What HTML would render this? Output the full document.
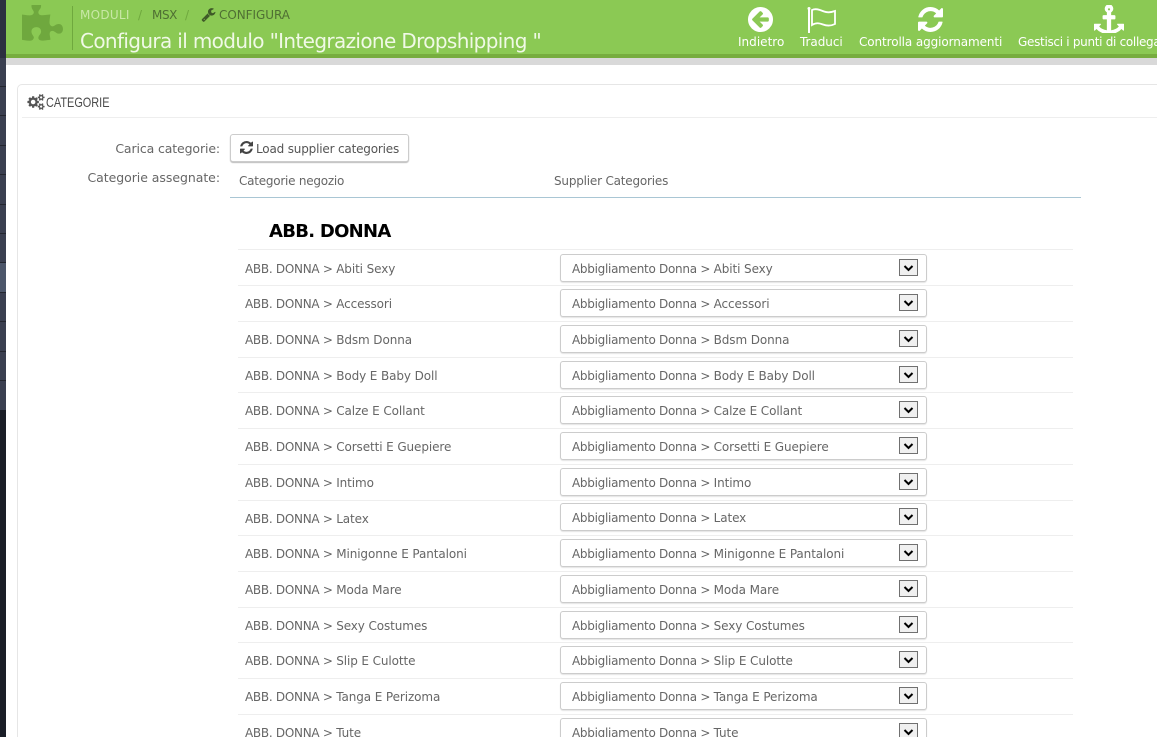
<!DOCTYPE html>
<html lang="it">
<head>
<meta charset="utf-8">
<title>Configura il modulo</title>
<style>
html,body{margin:0;padding:0;background:#fff;width:1157px;height:737px;overflow:hidden}
#w{position:absolute;left:0;top:0;width:1157px;height:737px;overflow:hidden;font-family:"DejaVu Sans","Liberation Sans",sans-serif;font-size:12px;color:#666}
div,span,svg{position:absolute}
em{font-style:normal;letter-spacing:-.28px}
.t{white-space:nowrap;letter-spacing:-.2px;line-height:16px}
.sep{left:0;width:6px;height:1px;background:#23262f}
.top{height:16px;line-height:16px;white-space:nowrap}
.tb{color:#fff;top:34px;white-space:nowrap;letter-spacing:-.14px;line-height:16px;font-size:12px}
.line{left:238px;width:835px;height:1px;background:#eeeeee}
.l{left:245px;white-space:nowrap;letter-spacing:-.1px;line-height:16px;color:#666;margin-top:1px}
.sel{left:560px;width:365px;height:26px;border:1px solid #ccc;border-radius:3px;background:#fff;box-shadow:0 1px 1px #e4e4e4}
.sel b{position:absolute;left:11px;top:6px;font-weight:normal;white-space:nowrap;letter-spacing:-.1px;line-height:16px;color:#666}
.sel i{position:absolute;left:338px;top:4px;width:17px;height:15px;border:1px solid #707070;background:#f0f0f0}
.sel svg{left:3px;top:4px}
</style>
</head>
<body>
<div id="w">
<div style="left:0;top:0;width:6px;height:58px;background:#2c3040"></div>
<div style="left:0;top:58px;width:6px;height:352px;background:#3a3f50"></div>
<div style="left:0;top:263px;width:6px;height:29px;background:#4c566a"></div>
<div style="left:0;top:410px;width:6px;height:327px;background:#1a1e27"></div>
<div class="sep" style="top:86px"></div><div class="sep" style="top:115px"></div><div class="sep" style="top:145px"></div><div class="sep" style="top:174px"></div><div class="sep" style="top:204px"></div><div class="sep" style="top:233px"></div><div class="sep" style="top:262px"></div><div class="sep" style="top:292px"></div><div class="sep" style="top:321px"></div><div class="sep" style="top:351px"></div><div class="sep" style="top:380px"></div>

<div style="left:6px;top:0;width:1151px;height:54px;background:#8bc954"></div>
<div style="left:6px;top:54px;width:1151px;height:4px;background:#77ad3f"></div>
<div style="left:6px;top:58px;width:1151px;height:7px;background:#d9d9d9"></div>

<svg style="left:22px;top:5px" width="41" height="38" viewBox="0 128 1664 1536" preserveAspectRatio="none"><path fill="#6fa83e" d="M1664 1098q0 81-44.500 135t-123.500 54q-41 0-77.500-17.500t-59-38-56.500-38-71-17.500q-110 0-110 124 0 39 16 115t15 115v5q-22 0-33 1-34 3-97.500 11.500t-115.500 13.500-98 5q-61 0-103-26.500t-42-83.500q0-37 17.500-71t38-56.500 38-59 17.500-77.500q0-79-54-123.500t-135-44.500q-84 0-143 45.500t-59 127.500q0 43 15 83t33.500 64.500 33.500 53 15 50.500q0 45-46 89-37 35-117 35-95 0-245-24-9-2-27.500-4t-27.500-4l-13-2q-1 0-3-1-2 0-2-1v-1024q2 1 17.500 3.500t34 5 21.500 3.500q150 24 245 24 80 0 117-35 46-44 46-89 0-22-15-50.500t-33.500-53-33.500-64.500-15-83q0-82 59-127.500t144-45.500q80 0 134 44.500t54 123.500q0 41-17.500 77.500t-38 59-38 56.500-17.500 71q0 57 42 83.500t103 26.500q64 0 180-15t163-17v2q-1 2-3.500 17.500t-5 34-3.500 21.500q-24 150-24 245 0 80 35 117 44 46 89 46 22 0 50.500-15t53-33.500 64.500-33.500 83-15q82 0 127.500 59t45.500 143z"/></svg>
<div style="left:72px;top:6px;width:1px;height:44px;background:#6fa83e"></div>

<div class="top" style="left:80px;top:7px;color:#c8e8a6;letter-spacing:.27px">MODULI</div>
<div class="top" style="left:138px;top:7px;color:#6fa83e">/</div>
<div class="top" style="left:152px;top:7px;color:#4f6f33;letter-spacing:-.4px">MSX</div>
<div class="top" style="left:185px;top:7px;color:#6fa83e">/</div>
<svg style="left:201px;top:7px" width="15" height="15" viewBox="0 0 1792 1792"><path fill="#3f5a28" d="M448 1472q0-26-19-45t-45-19-45 19-19 45 19 45 45 19 45-19 19-45zm644-420l-682 682q-37 37-90 37-52 0-91-37l-106-108q-38-36-38-90 0-53 38-91l681-681q39 98 114.500 173.500t173.500 114.500zm634-435q0 39-23 106-47 134-164.500 217.500t-258.500 83.500q-185 0-316.500-131.500t-131.500-316.500 131.500-316.500 316.500-131.500q58 0 121.500 16.500t107.500 46.500q16 11 16 28t-16 28l-293 169v224l193 107q5-3 79-48.500t135.500-81 70.500-35.500q15 0 23.500 10t8.500 25z"/></svg>
<div class="top" style="left:219px;top:7px;color:#4f6f33;letter-spacing:-.05px">CONFIGURA</div>
<div class="top" style="left:80px;top:28px;height:26px;line-height:26px;font-size:20px;color:#f0f9e6;letter-spacing:-.64px;font-family:'DejaVu Sans ExtraLight','DejaVu Sans',sans-serif">Configura il modulo "Integrazione Dropshipping "</div>

<svg style="left:748px;top:7px" width="25" height="25" viewBox="128 128 1536 1536"><path fill="#fff" d="M1408 960v-128q0-26-19-45t-45-19h-502l189-189q19-19 19-45t-19-45l-91-91q-18-18-45-18t-45 18l-362 362-91 91q-18 18-18 45t18 45l91 91 362 362q18 18 45 18t45-18l91-91q18-18 18-45t-18-45l-189-189h502q26 0 45-19t19-45zm256-64q0 209-103 385.500t-279.500 279.500-385.500 103-385.500-103-279.500-279.500-103-385.500 103-385.500 279.500-279.500 385.500-103 385.500 103 279.500 279.500 103 385.500z"/></svg>
<svg style="left:805px;top:6px" width="32" height="28" viewBox="0 0 32 28"><path d="M4 2v25" stroke="#fff" stroke-width="2" fill="none"/><circle cx="4" cy="2.500" r="1.500" fill="#fff"/><path d="M7 4c4-2 8 0 12 1.500s7 1 11-.5v13c-4 2-8 2-12 .5s-7-2-11 .5z" fill="none" stroke="#fff" stroke-width="1.800"/></svg>
<svg style="left:918px;top:7px" width="25" height="25" viewBox="128 128 1536 1536"><path fill="#fff" d="M1639 1056q0 5-1 7-64 268-268 434.500t-478 166.500q-146 0-282.500-55t-243.500-157l-129 129q-19 19-45 19t-45-19-19-45v-448q0-26 19-45t45-19h448q26 0 45 19t19 45-19 45l-137 137q71 66 161 102t187 36q134 0 250-65t186-179q11-17 53-117 8-23 30-23h192q13 0 22.500 9.500t9.500 22.500zm25-800v448q0 26-19 45t-45 19h-448q-26 0-45-19t-19-45 19-45l138-138q-148-137-349-137-134 0-250 65t-186 179q-11 17-53 117-8 23-30 23h-199q-13 0-22.500-9.500t-9.500-22.500v-7q65-268 270-434.500t480-166.500q146 0 284 55.500t245 156.500l130-129q19-19 45-19t45 19 19 45z"/></svg>
<svg style="left:1094px;top:5px" width="30" height="28" viewBox="0 0 1792 1664" preserveAspectRatio="none"><path fill="#fff" d="M960 256q0-26-19-45t-45-19-45 19-19 45 19 45 45 19 45-19 19-45zm832 888v352q0 22-20 30-8 2-12 2-12 0-23-9l-93-93q-119 143-318.500 226.500t-429.500 83.500-429.500-83.500-318.500-226.500l-93 93q-9 9-23 9-4 0-12-2-20-8-20-30v-352q0-14 9-23t23-9h352q22 0 30 20 8 19-7 35l-100 100q67 91 189.500 153.500t271.500 82.500v-647h-192q-26 0-45-19t-19-45v-128q0-26 19-45t45-19h192v-163q-58-34-93-92.500t-35-128.500q0-106 75-181t181-75 181 75 75 181q0 70-35 128.500t-93 92.500v163h192q26 0 45 19t19 45v128q0 26-19 45t-45 19h-192v647q149-20 271.500-82.500t189.500-153.500l-100-100q-15-16-7-35 8-20 30-20h352q14 0 23 9t9 23z"/></svg>
<div class="tb" style="left:738px;letter-spacing:.02px">Indietro</div>
<div class="tb" style="left:800px;letter-spacing:-.05px">Traduci</div>
<div class="tb" style="left:859px;letter-spacing:-.1px">Controlla aggiornamenti</div>
<div class="tb" style="left:1018px;letter-spacing:-.3px">Gestisci i punti di collegamento</div>

<div style="left:17px;top:84px;width:1160px;height:680px;border:1px solid #e6e6e6;border-radius:5px;box-sizing:border-box"></div>
<div style="left:22px;top:117px;width:1135px;height:1px;background:#eeeeee"></div>
<svg style="left:27px;top:94px" width="18" height="16" viewBox="0 0 1920 1792"><path fill="#555" fill-rule="evenodd" d="M896 896q0-106-75-181t-181-75-181 75-75 181 75 181 181 75 181-75 75-181zm768 512q0-52-38-90t-90-38-90 38-38 90q0 53 37.500 90.500t90.500 37.500 90.500-37.500 37.500-90.500zm0-1024q0-52-38-90t-90-38-90 38-38 90q0 53 37.500 90.500t90.500 37.500 90.500-37.500 37.500-90.500zm-384 421v185q0 10-7 19.500t-16 10.500l-155 24q-11 35-32 76 34 48 90 115 7 11 7 20 0 12-7 19-23 30-82.500 89.500t-78.500 59.500q-11 0-21-7l-115-90q-37 19-77 31-11 108-23 155-7 24-30 24h-186q-11 0-20-7.500t-10-17.500l-23-153q-34-10-75-31l-118 89q-7 7-20 7-11 0-21-8-144-133-144-160 0-9 7-19 10-14 41-53t47-61q-23-44-35-82l-152-24q-10-1-17-9.500t-7-19.500v-185q0-10 7-19.500t16-10.500l155-24q11-35 32-76-34-48-90-115-7-11-7-20 0-12 7-20 22-30 82-89t79-59q11 0 21 7l115 90q34-18 77-32 11-108 23-154 7-24 30-24h186q11 0 20 7.500t10 17.500l23 153q34 10 75 31l118-89q8-7 20-7 11 0 21 8 144 133 144 160 0 8-7 19-12 16-42 54t-45 60q23 48 34 82l152 23q10 2 17 10.500t7 19.500zm640 533v140q0 16-149 31-12 27-30 52 51 113 51 138 0 4-4 7-122 71-124 71-8 0-46-47t-52-68q-20 2-30 2t-30-2q-14 21-52 68t-46 47q-2 0-124-71-4-3-4-7 0-25 51-138-18-25-30-52-149-15-149-31v-140q0-16 149-31 13-29 30-52-51-113-51-138 0-4 4-7 4-2 35-20t59-34 30-16q8 0 46 46.500t52 67.500q20-2 30-2t30 2q51-71 92-112l6-2q4 0 124 70 4 3 4 7 0 25-51 138 17 23 30 52 149 15 149 31zm0-1024v140q0 16-149 31-12 27-30 52 51 113 51 138 0 4-4 7-122 71-124 71-8 0-46-47t-52-68q-20 2-30 2t-30-2q-14 21-52 68t-46 47q-2 0-124-71-4-3-4-7 0-25 51-138-18-25-30-52-149-15-149-31v-140q0-16 149-31 13-29 30-52-51-113-51-138 0-4 4-7 4-2 35-20t59-34 30-16q8 0 46 46.500t52 67.500q20-2 30-2t30 2q51-71 92-112l6-2q4 0 124 70 4 3 4 7 0 25-51 138 17 23 30 52 149 15 149 31z"/></svg>
<div class="t" style="left:46px;top:94px;font-family:'Liberation Sans','DejaVu Sans',sans-serif;font-size:14px;color:#4a4a4a;letter-spacing:0;transform:scaleX(.78);transform-origin:0 50%">CATEGORIE</div>

<div class="t" style="right:937px;top:141px;font-size:12.500px;letter-spacing:-.12px">Carica categorie:</div>
<div class="t" style="right:937px;top:170px;font-size:12.500px;letter-spacing:-.05px">Categorie assegnate:</div>
<div style="left:230px;top:134px;width:177px;height:26px;border:1px solid #ccc;border-radius:3px;box-shadow:0 1px 1px #bbb;background:#fff"></div>
<svg style="left:240px;top:141px" width="13" height="13" viewBox="128 128 1536 1536"><path fill="#444" d="M1639 1056q0 5-1 7-64 268-268 434.500t-478 166.500q-146 0-282.500-55t-243.500-157l-129 129q-19 19-45 19t-45-19-19-45v-448q0-26 19-45t45-19h448q26 0 45 19t19 45-19 45l-137 137q71 66 161 102t187 36q134 0 250-65t186-179q11-17 53-117 8-23 30-23h192q13 0 22.500 9.500t9.500 22.500zm25-800v448q0 26-19 45t-45 19h-448q-26 0-45-19t-19-45 19-45l138-138q-148-137-349-137-134 0-250 65t-186 179q-11 17-53 117-8 23-30 23h-199q-13 0-22.500-9.500t-9.500-22.500v-7q65-268 270-434.500t480-166.500q146 0 284 55.500t245 156.500l130-129q19-19 45-19t45 19 19 45z"/></svg>
<div class="t" style="left:256px;top:141px;color:#555;letter-spacing:-.18px">Load supplier categories</div>
<div class="t" style="left:239px;top:173px;letter-spacing:-.24px">Categorie negozio</div>
<div class="t" style="left:554px;top:173px">Supplier Categories</div>
<div style="left:230px;top:197px;width:851px;height:1px;background:#a9c6d4"></div>
<div class="t" style="left:269px;top:221px;font-size:18px;line-height:22px;font-weight:bold;color:#000;letter-spacing:-.72px">ABB. DONNA</div>

<div class="line" style="top:249px"></div><div class="l" style="top:260px"><em>ABB. DONNA &gt; </em>Abiti Sexy</div><div class="sel" style="top:254px"><b><em>Abbigliamento Donna &gt; </em>Abiti Sexy</b><i><svg width="11" height="9" viewBox="0 0 11 9"><path d="M1.500 2l4 4 4-4" fill="none" stroke="#000" stroke-width="2"/></svg></i></div>
<div class="line" style="top:285px"></div><div class="l" style="top:295px"><em>ABB. DONNA &gt; </em>Accessori</div><div class="sel" style="top:289px"><b><em>Abbigliamento Donna &gt; </em>Accessori</b><i><svg width="11" height="9" viewBox="0 0 11 9"><path d="M1.500 2l4 4 4-4" fill="none" stroke="#000" stroke-width="2"/></svg></i></div>
<div class="line" style="top:321px"></div><div class="l" style="top:331px"><em>ABB. DONNA &gt; </em>Bdsm Donna</div><div class="sel" style="top:325px"><b><em>Abbigliamento Donna &gt; </em>Bdsm Donna</b><i><svg width="11" height="9" viewBox="0 0 11 9"><path d="M1.500 2l4 4 4-4" fill="none" stroke="#000" stroke-width="2"/></svg></i></div>
<div class="line" style="top:357px"></div><div class="l" style="top:367px"><em>ABB. DONNA &gt; </em>Body E Baby Doll</div><div class="sel" style="top:361px"><b><em>Abbigliamento Donna &gt; </em>Body E Baby Doll</b><i><svg width="11" height="9" viewBox="0 0 11 9"><path d="M1.500 2l4 4 4-4" fill="none" stroke="#000" stroke-width="2"/></svg></i></div>
<div class="line" style="top:392px"></div><div class="l" style="top:402px"><em>ABB. DONNA &gt; </em>Calze E Collant</div><div class="sel" style="top:396px"><b><em>Abbigliamento Donna &gt; </em>Calze E Collant</b><i><svg width="11" height="9" viewBox="0 0 11 9"><path d="M1.500 2l4 4 4-4" fill="none" stroke="#000" stroke-width="2"/></svg></i></div>
<div class="line" style="top:428px"></div><div class="l" style="top:438px"><em>ABB. DONNA &gt; </em>Corsetti E Guepiere</div><div class="sel" style="top:432px"><b><em>Abbigliamento Donna &gt; </em>Corsetti E Guepiere</b><i><svg width="11" height="9" viewBox="0 0 11 9"><path d="M1.500 2l4 4 4-4" fill="none" stroke="#000" stroke-width="2"/></svg></i></div>
<div class="line" style="top:464px"></div><div class="l" style="top:474px"><em>ABB. DONNA &gt; </em>Intimo</div><div class="sel" style="top:468px"><b><em>Abbigliamento Donna &gt; </em>Intimo</b><i><svg width="11" height="9" viewBox="0 0 11 9"><path d="M1.500 2l4 4 4-4" fill="none" stroke="#000" stroke-width="2"/></svg></i></div>
<div class="line" style="top:500px"></div><div class="l" style="top:510px"><em>ABB. DONNA &gt; </em>Latex</div><div class="sel" style="top:503px"><b><em>Abbigliamento Donna &gt; </em>Latex</b><i><svg width="11" height="9" viewBox="0 0 11 9"><path d="M1.500 2l4 4 4-4" fill="none" stroke="#000" stroke-width="2"/></svg></i></div>
<div class="line" style="top:535px"></div><div class="l" style="top:545px"><em>ABB. DONNA &gt; </em>Minigonne E Pantaloni</div><div class="sel" style="top:539px"><b><em>Abbigliamento Donna &gt; </em>Minigonne E Pantaloni</b><i><svg width="11" height="9" viewBox="0 0 11 9"><path d="M1.500 2l4 4 4-4" fill="none" stroke="#000" stroke-width="2"/></svg></i></div>
<div class="line" style="top:571px"></div><div class="l" style="top:581px"><em>ABB. DONNA &gt; </em>Moda Mare</div><div class="sel" style="top:575px"><b><em>Abbigliamento Donna &gt; </em>Moda Mare</b><i><svg width="11" height="9" viewBox="0 0 11 9"><path d="M1.500 2l4 4 4-4" fill="none" stroke="#000" stroke-width="2"/></svg></i></div>
<div class="line" style="top:607px"></div><div class="l" style="top:617px"><em>ABB. DONNA &gt; </em>Sexy Costumes</div><div class="sel" style="top:611px"><b><em>Abbigliamento Donna &gt; </em>Sexy Costumes</b><i><svg width="11" height="9" viewBox="0 0 11 9"><path d="M1.500 2l4 4 4-4" fill="none" stroke="#000" stroke-width="2"/></svg></i></div>
<div class="line" style="top:642px"></div><div class="l" style="top:652px"><em>ABB. DONNA &gt; </em>Slip E Culotte</div><div class="sel" style="top:646px"><b><em>Abbigliamento Donna &gt; </em>Slip E Culotte</b><i><svg width="11" height="9" viewBox="0 0 11 9"><path d="M1.500 2l4 4 4-4" fill="none" stroke="#000" stroke-width="2"/></svg></i></div>
<div class="line" style="top:678px"></div><div class="l" style="top:688px"><em>ABB. DONNA &gt; </em>Tanga E Perizoma</div><div class="sel" style="top:682px"><b><em>Abbigliamento Donna &gt; </em>Tanga E Perizoma</b><i><svg width="11" height="9" viewBox="0 0 11 9"><path d="M1.500 2l4 4 4-4" fill="none" stroke="#000" stroke-width="2"/></svg></i></div>
<div class="line" style="top:714px"></div><div class="l" style="top:724px"><em>ABB. DONNA &gt; </em>Tute</div><div class="sel" style="top:718px"><b><em>Abbigliamento Donna &gt; </em>Tute</b><i><svg width="11" height="9" viewBox="0 0 11 9"><path d="M1.500 2l4 4 4-4" fill="none" stroke="#000" stroke-width="2"/></svg></i></div>
</div>
</body>
</html>
